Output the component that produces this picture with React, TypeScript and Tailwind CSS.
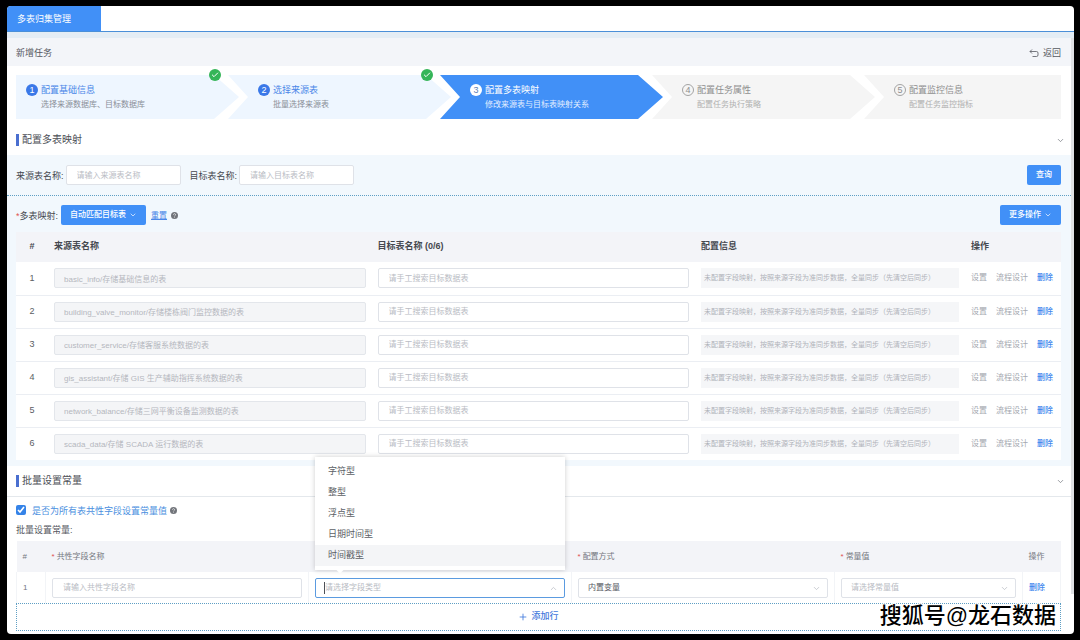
import { ReactNode, useState } from 'react'
import clsx from 'clsx'
import { Check, ChevronDown, ChevronUp, Plus } from 'lucide-react'

const steps = [
  { title: '配置基础信息', desc: '选择来源数据库、目标数据库', state: 'done' },
  { title: '选择来源表', desc: '批量选择来源表', state: 'done' },
  { title: '配置多表映射', desc: '修改来源表与目标表映射关系', state: 'active' },
  { title: '配置任务属性', desc: '配置任务执行策略', state: 'wait' },
  { title: '配置监控信息', desc: '配置任务监控指标', state: 'wait' },
]

const sources = [
  'basic_info/存储基础信息的表',
  'building_valve_monitor/存储楼栋阀门监控数据的表',
  'customer_service/存储客服系统数据的表',
  'gis_assistant/存储 GIS 生产辅助指挥系统数据的表',
  'network_balance/存储三网平衡设备监测数据的表',
  'scada_data/存储 SCADA 运行数据的表',
]

const fieldTypes = ['字符型', '整型', '浮点型', '日期时间型', '时间戳型']

const inputClass =
  'h-5 w-full rounded-xs border border-[#dfe2e8] bg-white px-2.5 text-[8px] text-[#606266] placeholder:text-[#b9bcc4] outline-none'

function Step({ index }: { index: number }) {
  const { title, desc, state } = steps[index]
  const first = index === 0
  const last = index === steps.length - 1

  return (
    <li className={clsx('relative', !last && '-mr-[11px]')}>
      <div
        className={clsx(
          'flex h-11 gap-[3px] pt-2',
          first ? 'pl-2.5' : 'pl-[30px]',
          first &&
            '[clip-path:polygon(0_0,calc(100%-25px)_0,100%_50%,calc(100%-25px)_100%,0_100%)]',
          !first &&
            !last &&
            '[clip-path:polygon(0_0,calc(100%-25px)_0,100%_50%,calc(100%-25px)_100%,0_100%,20px_50%)]',
          last && '[clip-path:polygon(0_0,100%_0,100%_100%,0_100%,20px_50%)]',
          state === 'done' && 'bg-[#eef6ff]',
          state === 'active' && 'bg-[#4190f7]',
          state === 'wait' && 'bg-[#f5f5f5]'
        )}
      >
        <span
          className={clsx(
            'mt-px flex size-3 shrink-0 items-center justify-center rounded-full text-[9px] leading-none',
            state === 'done' && 'bg-[#3a78e8] text-white',
            state === 'active' && 'bg-white text-[#5b7fb8]',
            state === 'wait' && 'border border-[#a3a3a3] text-[#8f8f8f]'
          )}
        >
          {index + 1}
        </span>
        <div>
          <h3
            className={clsx(
              'text-[9px] leading-[14px]',
              state === 'done' && 'text-[#4a86e8]',
              state === 'active' && 'text-white',
              state === 'wait' && 'text-[#8f8f8f]'
            )}
          >
            {title}
          </h3>
          <p
            className={clsx(
              'text-[8px] leading-4',
              state === 'done' && 'text-[#8a8f98]',
              state === 'active' && 'text-[#e2eeff]',
              state === 'wait' && 'text-[#b0b0b0]'
            )}
          >
            {desc}
          </p>
        </div>
      </div>
      {state === 'done' && (
        <span className="absolute -top-1.5 right-[18px] flex size-3 items-center justify-center rounded-full bg-[#35b558] text-white">
          <Check size={8} strokeWidth={3} />
        </span>
      )}
    </li>
  )
}

function SectionTitle({ children }: { children: ReactNode }) {
  return (
    <div className="flex items-center justify-between pr-1.5 pl-[9px]">
      <h2 className="border-l-3 border-[#4a6fd0] pl-[3px] text-[10px] leading-3 text-[#4d5057]">
        {children}
      </h2>
      <button type="button" aria-label="收起" className="text-[#7a7d84]">
        <ChevronDown size={9} />
      </button>
    </div>
  )
}

function HelpIcon() {
  return (
    <svg viewBox="0 0 12 12" className="size-[7px]" aria-hidden="true">
      <circle cx="6" cy="6" r="6" fill="#72757b" />
      <path
        d="M4.2 4.6a1.8 1.8 0 1 1 2.7 1.6c-.6.4-.9.6-.9 1.2"
        fill="none"
        stroke="#fff"
        strokeWidth="1.2"
      />
      <circle cx="6" cy="9.2" r=".8" fill="#fff" />
    </svg>
  )
}

function Required({ children }: { children: ReactNode }) {
  return (
    <>
      <span className="mr-0.5 text-[#e05252]">*</span>
      {children}
    </>
  )
}

function MappingTable() {
  return (
    <table className="w-full table-fixed border-collapse bg-white text-left">
      <thead className="bg-[#f3f4f8] text-[9px] text-[#45484f]">
        <tr className="h-[30px]">
          <th className="w-8 text-center">#</th>
          <th className="px-1.5">来源表名称</th>
          <th className="px-1.5">目标表名称 (0/6)</th>
          <th className="w-[270px] px-1.5">配置信息</th>
          <th className="w-24 px-1.5">操作</th>
        </tr>
      </thead>
      <tbody>
        {sources.map((source, i) => (
          <tr key={source} className="h-[33px] border-b border-[#ebeef3] last:border-b-0">
            <td className="text-center text-[9px] text-[#5a5d64]">{i + 1}</td>
            <td className="px-1.5">
              <input
                className="block h-5 w-full rounded-xs border border-[#e3e6eb] bg-[#f4f5f7] px-[9px] text-[8px] text-[#b4b7be]"
                aria-label="来源表名称"
                value={source}
                disabled
                readOnly
              />
            </td>
            <td className="px-1.5">
              <input
                className={clsx(inputClass, 'block')}
                aria-label="目标表名称"
                placeholder="请手工搜索目标数据表"
              />
            </td>
            <td className="px-1.5">
              <p className="h-5 overflow-hidden bg-[#f5f6f8] px-[3px] text-[7px] leading-5 whitespace-nowrap text-[#b0b3ba]">
                未配置字段映射，按照来源字段为准同步数据，全量同步（先清空后同步）
              </p>
            </td>
            <td className="px-1.5 text-[8px]">
              <div className="flex gap-[9px] whitespace-nowrap text-[#a5a8af]">
                <button type="button">设置</button>
                <button type="button">流程设计</button>
                <button type="button" className="font-medium text-[#3f87ee]">
                  删除
                </button>
              </div>
            </td>
          </tr>
        ))}
      </tbody>
    </table>
  )
}

function TypeSelect() {
  const [value, setValue] = useState('')

  return (
    <div className="relative">
      <div className="absolute bottom-7 left-0 z-10 w-full bg-white py-1 shadow-[0_0_5px_rgba(0,0,0,0.2)]">
        <ul role="listbox" className="text-[9px] text-[#5c5f66]">
          {fieldTypes.map((type) => (
            <li
              key={type}
              role="option"
              aria-selected={type === value}
              onClick={() => setValue(type)}
              className="px-[13px] leading-[21px] last:bg-[#f4f5f7]"
            >
              {type}
            </li>
          ))}
        </ul>
        <span className="absolute -bottom-1 left-[21px] h-1 w-2 bg-white [clip-path:polygon(0_0,100%_0,50%_100%)]" />
      </div>
      <input
        className="block h-5 w-full rounded-xs border border-[#5b9be0] bg-white px-[9px] text-[8px] outline-none placeholder:text-[#b9bcc4]"
        role="combobox"
        aria-expanded="true"
        aria-label="字段类型"
        placeholder="请选择字段类型"
        value={value}
        onChange={(e) => setValue(e.target.value)}
      />
      <span className="absolute top-1 left-[9px] h-3 w-px bg-[#4d5057]" />
      <ChevronUp size={9} className="absolute top-1.5 right-[7px] text-[#b9bcc4]" />
    </div>
  )
}

function Select({ label, text, muted }: { label: string; text: string; muted?: boolean }) {
  return (
    <div className="relative">
      <select
        aria-label={label}
        className={clsx(
          'block h-5 w-full appearance-none rounded-xs border border-[#dfe2e8] bg-white px-[9px] text-[8px]',
          muted ? 'text-[#b9bcc4]' : 'text-[#55585f]'
        )}
      >
        <option>{text}</option>
      </select>
      <ChevronDown
        size={9}
        className="pointer-events-none absolute top-1.5 right-[7px] text-[#b9bcc4]"
      />
    </div>
  )
}

function ConstantTable() {
  return (
    <table className="w-full table-fixed border-collapse bg-white text-left text-[8px] text-[#75787f]">
      <thead className="bg-[#f3f4f8]">
        <tr className="h-[31px] *:font-normal">
          <th className="w-[29px] pl-1.5">#</th>
          <th className="px-1.5">
            <Required>共性字段名称</Required>
          </th>
          <th className="px-1.5" aria-label="字段类型" />
          <th className="px-1.5">
            <Required>配置方式</Required>
          </th>
          <th className="w-[188px] px-1.5">
            <Required>常量值</Required>
          </th>
          <th className="w-[38px] px-1.5">操作</th>
        </tr>
      </thead>
      <tbody>
        <tr className="h-[31px] *:border-x *:border-[#f2f4f7]">
          <td className="pl-1.5">1</td>
          <td className="px-1.5">
            <input
              className={clsx(inputClass, 'block')}
              aria-label="共性字段名称"
              placeholder="请输入共性字段名称"
            />
          </td>
          <td className="px-1.5">
            <TypeSelect />
          </td>
          <td className="px-1.5">
            <Select label="配置方式" text="内置变量" />
          </td>
          <td className="px-1.5">
            <Select label="常量值" text="请选择常量值" muted />
          </td>
          <td className="px-1.5">
            <button type="button" className="font-medium whitespace-nowrap text-[#3f87ee]">
              删除
            </button>
          </td>
        </tr>
      </tbody>
    </table>
  )
}

export default function App() {
  const [checked, setChecked] = useState(true)

  return (
    <div
      lang="zh-CN"
      className="relative min-h-screen bg-black pt-1.5 pr-1.5 pb-1.5 pl-[7px] font-['Liberation_Sans','Noto_Sans_CJK_SC',sans-serif]"
    >
      <main className="overflow-hidden rounded-[4px] bg-white">
        <nav className="flex border-b border-[#4a8fd8]">
          <a
            href="#"
            className="bg-[#4190f7] pt-0.5 pr-[30px] pl-2.5 text-[9px] leading-[23px] text-white"
          >
            多表归集管理
          </a>
        </nav>

        <div className="flex border-t-6 border-[#e4edf5]">
          <div className="min-w-0 flex-1">
            <header className="flex h-7 items-center justify-between bg-[#f3f5f9] pt-0.5 pr-2.5 pl-[9px] text-[9px] leading-3 text-[#55585f]">
              <h1>新增任务</h1>
              <button type="button" className="flex items-center gap-1">
                <svg
                  viewBox="0 0 10 9"
                  className="h-[9px] w-2.5"
                  fill="none"
                  stroke="currentColor"
                  aria-hidden="true"
                >
                  <path d="M3 .5 1 2.5l2 2M1 2.5h6.5a1.5 1.5 0 0 1 1.5 1.5v2a1.5 1.5 0 0 1-1.5 1.5H3.5" strokeWidth=".8" />
                </svg>
                返回
              </button>
            </header>

            <ol className="grid grid-cols-[212fr_212fr_212fr_212fr_197fr] pt-[9px] pr-2.5 pl-[9px]">
              {steps.map((step, i) => (
                <Step key={step.title} index={i} />
              ))}
            </ol>

            <div className="pt-[15px] pb-[9px]">
              <SectionTitle>配置多表映射</SectionTitle>
            </div>

            <section className="bg-[#f2f8fd]">
              <form className="flex h-[41px] items-center border-b border-dotted border-[#5f9fc4] pr-2.5 pl-[9px] text-[9px] leading-3 text-[#45484f]">
                <label htmlFor="source" className="pt-0.5">
                  来源表名称:
                </label>
                <div className="mr-[9px] ml-0.5 w-[115px]">
                  <input
                    id="source"
                    className={clsx(inputClass, 'block')}
                    placeholder="请输入来源表名称"
                  />
                </div>
                <label htmlFor="target" className="pt-0.5">
                  目标表名称:
                </label>
                <div className="ml-0.5 w-[115px]">
                  <input
                    id="target"
                    className={clsx(inputClass, 'block')}
                    placeholder="请输入目标表名称"
                  />
                </div>
                <button
                  type="button"
                  className="ml-auto h-5 rounded-xs bg-[#4190f7] px-[9px] text-[8px] font-medium text-white"
                >
                  查询
                </button>
              </form>

              <div className="pr-2.5 pb-1.5 pl-[9px]">
                <div className="flex h-9 items-center pt-0.5 text-[9px] leading-3 text-[#45484f]">
                  <span className="pt-0.5">
                    <span className="text-[#e05252]">*</span>多表映射:
                  </span>
                  <button
                    type="button"
                    className="ml-[3px] flex h-5 items-center gap-[3px] rounded-xs bg-[#4190f7] px-[9px] text-[8px] font-medium text-white"
                  >
                    自动匹配目标表
                    <ChevronDown size={8} />
                  </button>
                  <a
                    href="#"
                    className="mr-1 ml-[5px] pt-0.5 text-[8px] text-[#4a86e8] underline"
                  >
                    重置
                  </a>
                  <HelpIcon />
                  <button
                    type="button"
                    className="ml-auto flex h-5 items-center gap-[3px] rounded-xs bg-[#4190f7] px-[9px] text-[8px] font-medium text-white"
                  >
                    更多操作
                    <ChevronDown size={8} />
                  </button>
                </div>
                <MappingTable />
              </div>
            </section>

            <section>
              <div className="border-b border-[#e4e8ec] pt-[9px] pb-[9px]">
                <SectionTitle>批量设置常量</SectionTitle>
              </div>
              <div className="pr-2.5 pb-[3px] pl-[9px]">
                <label className="flex h-[26px] items-center text-[9px] leading-3 text-[#4a8fe0]">
                  <input
                    type="checkbox"
                    checked={checked}
                    onChange={(e) => setChecked(e.target.checked)}
                    className="mr-1.5 size-2.5 accent-[#3583e8]"
                  />
                  <span className="mr-[3px] pt-px">是否为所有表共性字段设置常量值</span>
                  <HelpIcon />
                </label>
                <p className="h-[18px] text-[9px] leading-[14px] text-[#55585f]">批量设置常量:</p>
                <ConstantTable />
                <button
                  type="button"
                  className="flex h-7 w-full items-center justify-center gap-[3px] border border-dotted border-[#5f9fc4] text-[9px] font-medium text-[#3f78dc]"
                >
                  <Plus size={10} />
                  添加行
                </button>
              </div>
            </section>
          </div>
          <div className="mb-10 w-[3px] bg-[#dfe1e4]" />
        </div>
      </main>

      <p className="absolute right-6 bottom-2 text-[22px] leading-8 font-medium text-black [text-shadow:-1px_-1px_0_#fff,1px_-1px_0_#fff,-1px_1px_0_#fff,1px_1px_0_#fff]">
        搜狐号@龙石数据
      </p>
    </div>
  )
}
